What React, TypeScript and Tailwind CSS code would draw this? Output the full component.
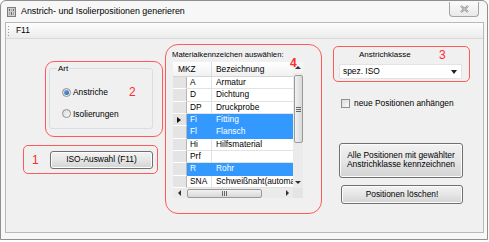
import React from 'react';

type Row = { k: string; b: string; sel?: boolean; cur?: boolean };

const rows: Row[] = [
  { k: 'A', b: 'Armatur' },
  { k: 'D', b: 'Dichtung' },
  { k: 'DP', b: 'Druckprobe' },
  { k: 'Fi', b: 'Fitting', sel: true, cur: true },
  { k: 'Fl', b: 'Flansch', sel: true },
  { k: 'Hi', b: 'Hilfsmaterial' },
  { k: 'Prf', b: '' },
  { k: 'R', b: 'Rohr', sel: true },
  { k: 'SNA', b: 'Schweißnaht(automat' },
];

const Arrow = ({ dir }: { dir: 'up' | 'down' | 'left' | 'right' }) => {
  const pts = {
    up: '0,4 3,1 6,4',
    down: '0,1 3,4 6,1',
    left: '4,0 1,3 4,6',
    right: '1,0 4,3 1,6',
  }[dir];
  const horiz = dir === 'left' || dir === 'right';
  return (
    <svg width={horiz ? 5 : 6} height={horiz ? 6 : 5} viewBox={horiz ? '0 0 5 6' : '0 0 6 5'}>
      <polygon points={pts} fill="#333" />
    </svg>
  );
};

const WinButton = ({ className, children }: { className: string; children: React.ReactNode }) => (
  <div
    className={`flex flex-col items-center justify-center rounded-[3px] border border-[#707070] bg-gradient-to-b from-[#f2f2f2] via-[#e6e6e6] to-[#d3d3d3] text-[8.4px] leading-[9px] text-black shadow-[inset_0_0_0_1px_#fcfcfc] ${className}`}
  >
    {children}
  </div>
);

const Radio = ({ checked, label }: { checked?: boolean; label: string }) => (
  <div className="flex items-center gap-[2px]">
    <div className="flex h-[9px] w-[9px] items-center justify-center rounded-full border border-[#8e8f8f] bg-gradient-to-br from-[#d6d6d6] to-[#fdfdfd]">
      {checked && <div className="h-[5px] w-[5px] rounded-full bg-gradient-to-br from-[#7ab0e8] to-[#1f5aa8]" />}
    </div>
    <span>{label}</span>
  </div>
);

const Grid = () => (
  <div className="ml-[7px] mt-[3px] flex h-[136px] w-[130px] flex-col bg-[#f0f0f0]">
    <div className="flex h-[126px]">
      <div className="flex w-[120px] flex-col bg-white">
        <div className="flex h-[15px] border-b border-[#d5d5d5] bg-gradient-to-b from-white to-[#f1f1f1] text-[8.4px]">
          <div className="flex w-[39px] items-center border-r border-[#dcdcdc] pl-[5px]">MKZ</div>
          <div className="flex flex-1 items-center pl-[4px]">Bezeichnung</div>
        </div>
        {rows.map((r) => (
          <div key={r.k} className="flex h-[12.33px] text-[8.4px] leading-[11px]">
            <div className="flex w-[14px] items-center border-b border-r border-b-white border-r-[#b5b5b5] bg-[#e4e4e4] pl-[4px]">
              {r.cur && (
                <svg width="4" height="6" viewBox="0 0 4 6">
                  <polygon points="0,0 4,3 0,6" fill="#111" />
                </svg>
              )}
            </div>
            <div
              className={`flex w-[25px] items-center border-b border-r pl-[3px] ${
                r.sel ? 'border-[#3399ff] bg-[#3399ff] text-white' : 'border-[#e2e2e2] text-black'
              }`}
            >
              {r.k}
            </div>
            <div
              className={`flex flex-1 items-center overflow-hidden whitespace-nowrap border-b pl-[4px] ${
                r.sel ? 'border-[#3399ff] bg-[#3399ff] text-white' : 'border-[#e2e2e2] text-black'
              }`}
            >
              {r.b}
            </div>
          </div>
        ))}
      </div>
      <div className="flex w-[10px] flex-col items-center bg-[#ebebeb]">
        <div className="flex h-[11px] w-full items-center justify-center bg-[#f4f4f4]">
          <Arrow dir="up" />
        </div>
        <div className="mt-[2px] flex h-[68px] w-[9px] flex-col items-center justify-center gap-[1px] rounded-[2px] border border-[#9a9a9a] bg-gradient-to-r from-[#f2f2f2] to-[#d8d8d8]">
          <div className="h-px w-[5px] bg-[#666]" />
          <div className="h-px w-[5px] bg-[#666]" />
          <div className="h-px w-[5px] bg-[#666]" />
        </div>
        <div className="flex-1" />
        <div className="flex h-[11px] w-full items-center justify-center">
          <Arrow dir="down" />
        </div>
      </div>
    </div>
    <div className="flex h-[10px]">
      <div className="flex w-[120px] items-center bg-[#ebebeb]">
        <div className="flex h-full w-[12px] items-center justify-center">
          <Arrow dir="left" />
        </div>
        <div className="ml-[2px] flex h-[9px] w-[75px] items-center justify-center gap-[1px] rounded-[2px] border border-[#9a9a9a] bg-gradient-to-b from-[#f2f2f2] to-[#d8d8d8]">
          <div className="h-[5px] w-px bg-[#666]" />
          <div className="h-[5px] w-px bg-[#666]" />
          <div className="h-[5px] w-px bg-[#666]" />
        </div>
        <div className="flex-1" />
        <div className="flex h-full w-[12px] items-center justify-center">
          <Arrow dir="right" />
        </div>
      </div>
      <div className="w-[10px] bg-[#e4e4e4]" />
    </div>
  </div>
);

export default function App() {
  return (
    <div
      className="h-[242px] w-[489px] overflow-hidden bg-white text-black"
      style={{ fontFamily: '"Liberation Sans", Arial, sans-serif' }}
    >
      <div className="flex h-[240px] w-[488px] flex-col rounded-t-[6px] border border-[#8f8f8f] bg-[#f7f7f7]">
        {/* title bar */}
        <div className="relative flex h-[21px] items-center">
          <div className="ml-[6px] grid h-[10px] w-[9px] grid-cols-3 gap-px border border-[#7d7d7d] bg-[#cfcfcf] p-px">
            <div className="bg-[#6a6a6a]" />
            <div className="bg-[#a8a8a8]" />
            <div className="bg-[#6a6a6a]" />
            <div className="bg-[#a8a8a8]" />
            <div className="bg-[#6a6a6a]" />
            <div className="bg-[#a8a8a8]" />
          </div>
          <span className="ml-[5px] text-[8.9px]">Anstrich- und Isolierpositionen generieren</span>
          <div className="absolute right-[8px] top-[1px] flex h-[15px] w-[30px] items-center justify-center rounded-b-[4px] border border-t-0 border-[#a4a4a4] bg-gradient-to-b from-[#fbfbfb] to-[#e9e9e9]">
            <svg width="9" height="8" viewBox="0 0 9 8">
              <path d="M1 1 L8 7 M8 1 L1 7" stroke="#8a8a8a" strokeWidth="2.2" />
              <path d="M1 1 L8 7 M8 1 L1 7" stroke="#e6e6e6" strokeWidth="0.8" />
            </svg>
          </div>
        </div>

        {/* client */}
        <div className="ml-[4px] mr-[3px] flex h-[211px] flex-col border border-[#b9b9b9] bg-[#f0f0f0]">
          <div className="flex h-[16px] items-center border-b border-[#d9d9d9] bg-gradient-to-b from-[#fdfdfd] to-[#ececec]">
            <div className="ml-[2px] flex h-[10px] flex-col justify-between">
              <div className="h-px w-px bg-[#9a9a9a]" />
              <div className="h-px w-px bg-[#9a9a9a]" />
              <div className="h-px w-px bg-[#9a9a9a]" />
              <div className="h-px w-px bg-[#9a9a9a]" />
            </div>
            <span className="ml-[7px] text-[8.4px]">F11</span>
          </div>

          <div className="flex flex-1 pl-[17px] text-[8.4px]">
            {/* left column */}
            <div className="flex w-[140px] flex-col">
              <div className="relative ml-[22px] mt-[22px] h-[76px] w-[118px] rounded-[9px] border border-[#ff5a5a] pl-[3px] pt-[2px]">
                <fieldset className="h-[65px] w-[104px] rounded-[3px] border border-[#d5dfe5] pl-[12px]">
                  <legend className="ml-[-5px] px-[1px] text-[8px] leading-[9px]">Art</legend>
                  <div className="mt-[13px] flex flex-col gap-[9px]">
                    <Radio checked label="Anstriche" />
                    <Radio label="Isolierungen" />
                  </div>
                </fieldset>
                <span className="absolute left-[83px] top-[24px] text-[12px] leading-[13px] text-[#ff2a2a]">2</span>
              </div>
              <div className="mt-[8px] flex h-[29px] w-[135px] items-center rounded-[5px] border border-[#ff5a5a] pl-[8px]">
                <span className="w-[18px] text-[12px] text-[#ff2a2a]">1</span>
                <WinButton className="h-[18px] w-[103px]">ISO-Auswahl (F11)</WinButton>
              </div>
            </div>

            {/* middle column */}
            <div className="relative ml-[2px] mt-[5px] h-[170px] w-[157px] rounded-[13px] border border-[#ff5a5a]">
              <div className="ml-[6px] mt-[5px] text-[7.7px] leading-[9px]">Materialkennzeichen auswählen:</div>
              <span className="absolute left-[124px] top-[12px] text-[12px] font-bold leading-[13px] text-[#ff2a2a]">4</span>
              <Grid />
            </div>

            {/* right column */}
            <div className="ml-[11px] flex flex-col">
              <div className="relative mt-[7px] h-[36px] w-[137px] rounded-[5px] border border-[#ff5a5a]">
                <div className="ml-[25px] mt-[3px] text-[8px] leading-[10px]">Anstrichklasse</div>
                <span className="absolute left-[105px] top-[2px] text-[12px] leading-[13px] text-[#ff2a2a]">3</span>
                <div className="ml-[5px] mt-[4px] flex h-[15px] w-[123px] items-center justify-between border border-[#e3e3e3] bg-white pl-[3px] pr-[4px]">
                  <span>spez. ISO</span>
                  <svg width="6" height="4" viewBox="0 0 6 4">
                    <polygon points="0,0 6,0 3,4" fill="#222" />
                  </svg>
                </div>
              </div>
              <div className="ml-[8px] mt-[15px] flex items-center gap-[4px]">
                <div className="h-[9px] w-[9px] border border-[#8e8f8f] bg-gradient-to-br from-[#dcdcdc] to-[#fbfbfb]" />
                <span>neue Positionen anhängen</span>
              </div>
              <WinButton className="ml-[6px] mt-[33px] h-[35px] w-[124px]">
                <span>Alle Positionen mit gewählter</span>
                <span>Anstrichklasse kennzeichnen</span>
              </WinButton>
              <WinButton className="ml-[8px] mt-[7px] h-[19px] w-[122px]">Positionen löschen!</WinButton>
            </div>
          </div>
        </div>
      </div>
    </div>
  );
}
